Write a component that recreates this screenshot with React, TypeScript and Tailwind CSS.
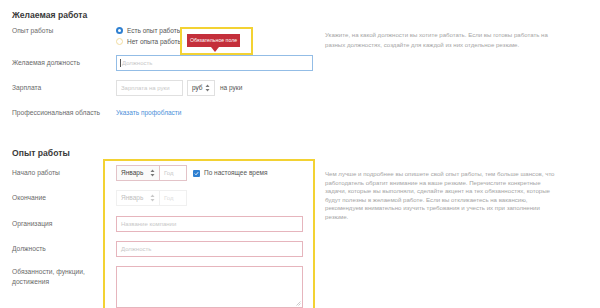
import React from 'react';

const label = 'w-[104px] shrink-0 text-[6.7px] text-[#6a6a6a]';
const help = 'text-[6.1px] text-[#a5a5a5] whitespace-nowrap';

function Arrows({ faded }: { faded?: boolean }) {
  return (
    <svg width="5" height="8" viewBox="0 0 5 8" className={faded ? 'opacity-40' : ''}>
      <path d="M2.5 0.5 L4.5 3 L0.5 3 Z" fill="#777" />
      <path d="M2.5 7.5 L4.5 5 L0.5 5 Z" fill="#777" />
    </svg>
  );
}

function Input({ placeholder, w, border, h = 'h-[16px]' }: { placeholder: string; w: string; border: string; h?: string }) {
  return (
    <div className={`${w} ${h} border ${border} bg-white flex items-center px-[4px] text-[6px] text-[#c8c8c8]`}>
      {placeholder}
    </div>
  );
}

export default function App() {
  return (
    <div className="relative w-[600px] h-[308px] overflow-hidden bg-white" style={{ fontFamily: '"Liberation Sans", Arial, sans-serif' }}>
      {/* Желаемая работа */}
      <div className="pl-3 pt-[9px]">
        <h2 className="h-[12px] leading-[12px] text-[8.6px] font-bold text-[#3a3a3a]">Желаемая работа</h2>
        <div className="flex mt-[4px]">
          <div className="w-[301px] shrink-0">
            <div className="flex">
              <div className={`${label} leading-[11px]`}>Опыт работы</div>
              <div className="flex flex-col">
                <div className="h-[11px] flex items-center gap-[4px]">
                  <span className="w-[7px] h-[7px] rounded-full bg-[#2f80d1] flex items-center justify-center">
                    <span className="w-[2.5px] h-[2.5px] rounded-full bg-white" />
                  </span>
                  <span className="text-[6.5px] text-[#555]">Есть опыт работы</span>
                </div>
                <div className="h-[11px] flex items-center gap-[4px]">
                  <span className="w-[7px] h-[7px] rounded-full border border-[#f1dca0] bg-white" />
                  <span className="text-[6.5px] text-[#555]">Нет опыта работы</span>
                </div>
              </div>
            </div>
            <div className="flex items-center mt-[8px]">
              <div className={label}>Желаемая должность</div>
              <div className="w-[197px] h-[16px] border border-[#93bde6] bg-white flex items-center px-[3px] text-[6px] text-[#c8c8c8]">
                <span className="w-px h-[8px] bg-[#555] mr-[1px]" />Должность
              </div>
            </div>
            <div className="flex items-center mt-[9px]">
              <div className={label}>Зарплата</div>
              <Input placeholder="Зарплата на руки" w="w-[67px]" border="border-[#e0e0e0]" />
              <div className="ml-[4px] w-[28px] h-[16px] border border-[#e0e0e0] flex items-center justify-between px-[4px] text-[6.5px] text-[#444]">
                руб <Arrows />
              </div>
              <span className="ml-[5px] text-[6.5px] text-[#555]">на руки</span>
            </div>
            <div className="flex items-center mt-[10px] h-[14px]">
              <div className={label}>Профессиональная область</div>
              <span className="text-[6.5px] text-[#4a90d9]">Указать профобласти</span>
            </div>
          </div>
          <div className={`ml-[12px] pt-[5px] leading-[9.7px] ${help}`}>
            Укажите, на какой должности вы хотите работать. Если вы готовы работать на
            <br />
            разных должностях, создайте для каждой из них отдельное резюме.
          </div>
        </div>
      </div>

      {/* Опыт работы */}
      <div className="pl-3 mt-[27px]">
        <h2 className="h-[12px] leading-[12px] text-[8.6px] font-bold text-[#3a3a3a]">Опыт работы</h2>
        <div className="flex mt-[6px]">
          <div className="w-[301px] shrink-0">
            <div className="flex items-center">
              <div className={label}>Начало работы</div>
              <div className="flex h-[16px] border border-[#e3c3c8]">
                <div className="w-[42px] flex items-center justify-between px-[4px] text-[6.5px] text-[#444] bg-[#fafafa]">
                  Январь <Arrows />
                </div>
                <div className="w-[27px] border-l border-[#e3c3c8] flex items-center px-[4px] text-[6px] text-[#c8c8c8]">Год</div>
              </div>
              <span className="ml-[6px] w-[7px] h-[7px] rounded-[1px] bg-[#2f80d1] flex items-center justify-center">
                <svg width="5" height="5" viewBox="0 0 5 5">
                  <path d="M0.8 2.6 L2 3.8 L4.2 1.2" stroke="white" strokeWidth="0.9" fill="none" />
                </svg>
              </span>
              <span className="ml-[4px] text-[6.5px] text-[#555]">По настоящее время</span>
            </div>
            <div className="flex items-center mt-[9px]">
              <div className={label}>Окончание</div>
              <div className="flex h-[16px] border border-[#f0f0f0]">
                <div className="w-[42px] flex items-center justify-between px-[4px] text-[6.5px] text-[#c0c0c0]">
                  Январь <Arrows faded />
                </div>
                <div className="w-[27px] border-l border-[#f0f0f0] flex items-center px-[4px] text-[6px] text-[#ddd]">Год</div>
              </div>
            </div>
            <div className="flex items-center mt-[10px]">
              <div className={label}>Организация</div>
              <Input placeholder="Название компании" w="w-[187px]" border="border-[#e6b5bd]" />
            </div>
            <div className="flex items-center mt-[9px]">
              <div className={label}>Должность</div>
              <Input placeholder="Должность" w="w-[187px]" border="border-[#e6b5bd]" />
            </div>
            <div className="flex mt-[9px]">
              <div className={`${label} leading-[10px] pt-[1px]`}>
                Обязанности, функции,
                <br />
                достижения
              </div>
              <div className="relative w-[187px] h-[42px] border border-[#e6b5bd] bg-white">
                <svg width="5" height="5" viewBox="0 0 5 5" className="absolute right-[1px] bottom-[1px]">
                  <path d="M4.5 0.5 L0.5 4.5 M4.5 2.5 L2.5 4.5" stroke="#aaa" strokeWidth="0.6" />
                </svg>
              </div>
            </div>
          </div>
          <div className={`ml-[12px] pt-[5px] leading-[8.6px] ${help}`}>
            Чем лучше и подробнее вы опишете свой опыт работы, тем больше шансов, что
            <br />
            работодатель обратит внимание на ваше резюме. Перечислите конкретные
            <br />
            задачи, которые вы выполняли, сделайте акцент на тех обязанностях, которые
            <br />
            будут полезны в желаемой работе. Если вы откликаетесь на вакансию,
            <br />
            рекомендуем внимательно изучить требования и учесть их при заполнении
            <br />
            резюме.
          </div>
        </div>
      </div>

      {/* highlight overlays */}
      <div className="absolute left-[180px] top-[27px] w-[73px] h-[28px] border-2 border-[#f3d233]" />
      <div className="absolute left-[187px] top-[34px] w-[53px] h-[13px] bg-[#c42f3b] flex items-center justify-center text-[5.2px] text-white whitespace-nowrap">
        Обязательное поле
        <span className="absolute left-[24px] top-[13px] w-0 h-0 border-l-[4px] border-r-[4px] border-t-[5px] border-l-transparent border-r-transparent border-t-[#c42f3b]" />
      </div>
      <div className="absolute left-[103px] top-[159px] w-[212px] h-[160px] border-2 border-[#f3d233]" />
    </div>
  );
}
